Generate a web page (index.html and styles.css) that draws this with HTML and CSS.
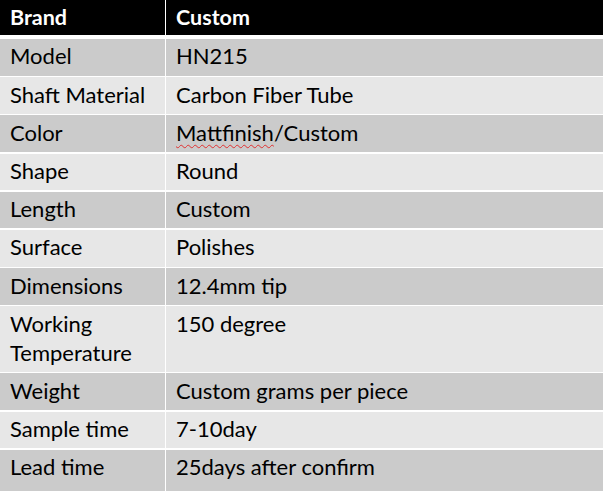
FILE: index.html
```html
<!DOCTYPE html>
<html>
<head>
<meta charset="utf-8">
<link rel="stylesheet" href="styles.css">
</head>
<body>
<div class="spec">
  <div class="row head"><div class="cell">Brand</div><div class="cell">Custom</div></div>
  <div class="row dark"><div class="cell">Model</div><div class="cell">HN215</div></div>
  <div class="row light"><div class="cell">Shaft Material</div><div class="cell">Carbon Fiber Tube</div></div>
  <div class="row dark"><div class="cell">Color</div><div class="cell"><span class="spell">Mattfinish</span>/Custom</div></div>
  <div class="row light"><div class="cell">Shape</div><div class="cell">Round</div></div>
  <div class="row dark"><div class="cell">Length</div><div class="cell">Custom</div></div>
  <div class="row light"><div class="cell">Surface</div><div class="cell">Polishes</div></div>
  <div class="row dark"><div class="cell">Dimensions</div><div class="cell">12.4mm tip</div></div>
  <div class="row light tall"><div class="cell">Working Temperature</div><div class="cell">150 degree</div></div>
  <div class="row dark"><div class="cell">Weight</div><div class="cell">Custom grams per piece</div></div>
  <div class="row light"><div class="cell">Sample time</div><div class="cell">7-10day</div></div>
  <div class="row dark last"><div class="cell">Lead time</div><div class="cell">25days after confirm</div></div>
</div>
</body>
</html>
```
FILE: styles.css
```css
html, body {
  margin: 0;
  padding: 0;
  background: #ffffff;
}
.spec {
  width: 603px;
  height: 491px;
  display: flex;
  flex-direction: column;
  gap: 1.6px;
  background: #ffffff;
  font-family: "Lato", "Open Sans", sans-serif;
  font-size: 22px;
  line-height: 29px;
  color: #000000;
}
.row {
  display: grid;
  grid-template-columns: 164.5px 1fr;
  column-gap: 1.5px;
  height: 36.6px;
  flex: none;
}
.cell {
  padding: 2.5px 10px 0 10px;
  white-space: nowrap;
}
.head {
  height: 35px;
  margin-bottom: 2.4px;
}
.head .cell {
  background: #000000;
  color: #ffffff;
  font-weight: 700;
  font-size: 21.5px;
}
.dark .cell {
  background: #cbcbcb;
}
.light .cell {
  background: #e7e7e7;
}
.tall {
  height: 65.5px;
}
.tall .cell {
  white-space: normal;
}
.last {
  flex: 1 1 auto;
}
.spell {
  text-decoration: underline wavy #e03030;
  text-decoration-thickness: 1px;
  text-underline-offset: 3px;
  text-decoration-skip-ink: none;
}
```
